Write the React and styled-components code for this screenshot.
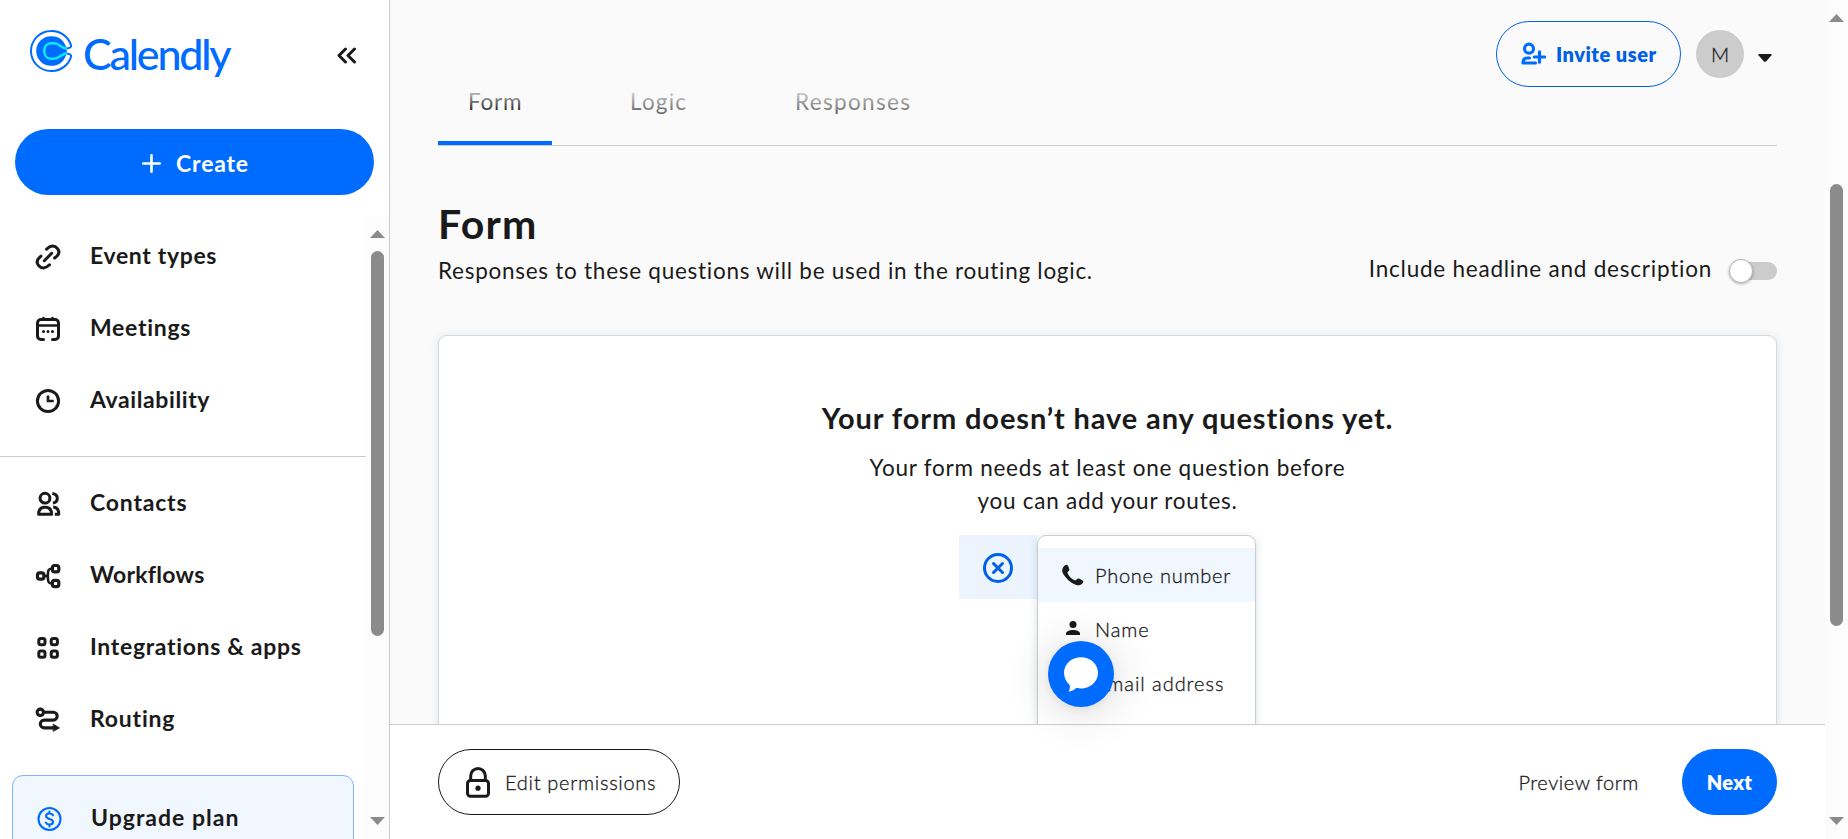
import React from 'react';
import styled, { createGlobalStyle, css } from 'styled-components';

const GlobalStyle = createGlobalStyle`
  * { box-sizing: border-box; }
  body { margin: 0; background: #fafafa; color: #1a1a1a; font-family: Lato, "Open Sans", sans-serif; }
  button { font: inherit; color: inherit; background: none; border: 0; padding: 0; margin: 0; cursor: pointer; }
  h1, h2, p { margin: 0; }
  svg { display: block; flex: none; }
`;

const tracking = css`
  letter-spacing: ${(p) => p.$track || 0}px;
  white-space: nowrap;
`;

/* a weight halfway between light and regular */
const bookWeight = css`
  font-weight: 300;
  -webkit-text-stroke: 0.3px currentColor;
`;

const Page = styled.div`
  display: flex;
  width: 1848px;
  height: 839px;
  overflow: hidden;
`;

/* ---------- scrollbars ---------- */

const ScrollTrack = styled.div`
  flex: none;
  width: 23px;
  display: flex;
  flex-direction: column;
  align-items: center;
  background: #fcfcfc;
  padding: ${(p) => p.$top}px 0 14px;
`;
const ScrollThumb = styled.div`
  width: 13px;
  height: ${(p) => p.$height}px;
  margin-top: ${(p) => p.$offset}px;
  margin-bottom: auto;
  border-radius: 7px;
  background: #8b8b8b;
`;

function ScrollBar({ top, offset, height }) {
  return (
    <ScrollTrack $top={top}>
      <svg width="15" height="8" viewBox="0 0 15 8"><path d="M7.5 0L15 8H0z" fill="#8b8b8b" /></svg>
      <ScrollThumb $height={height} $offset={offset} />
      <svg width="15" height="8" viewBox="0 0 15 8"><path d="M0 0h15L7.5 8z" fill="#8b8b8b" /></svg>
    </ScrollTrack>
  );
}

/* ---------- sidebar ---------- */

const Sidebar = styled.aside`
  flex: none;
  width: 390px;
  border-right: 1px solid #ccc;
  background: #fff;
  display: flex;
  flex-direction: column;
`;
const Brand = styled.div`
  height: 129px;
  padding: 30px 32px 0 30px;
  display: flex;
  align-items: flex-start;
`;
const Wordmark = styled.span`
  margin: -4px 0 0 10px;
  font-size: 43px;
  line-height: 56px;
  font-weight: 500;
  color: #006bff;
  ${tracking}
`;
const Collapse = styled.button`
  margin: 17px 0 0 auto;
`;
const CreateButton = styled.button`
  margin: 0 15px;
  width: 359px;
  height: 66px;
  flex: none;
  border-radius: 33px;
  background: #006bff;
  color: #fff;
  font-size: 23px;
  font-weight: 700;
  display: flex;
  align-items: center;
  justify-content: center;
  gap: 15px;
  padding: 2px 0 0 2px;
  ${tracking}
`;
const NavArea = styled.div`
  flex: 1;
  min-height: 0;
  margin-top: 21px;
  display: flex;
`;
const NavList = styled.nav`
  flex: 1;
  overflow: hidden;
  padding-top: 3px;
`;
const NavItem = styled.a`
  height: 72px;
  padding-left: 35px;
  display: flex;
  align-items: center;
  gap: 29px;
  font-size: 23px;
  font-weight: 700;
  ${tracking}
  svg { margin-top: 4px; }
`;
const Divider = styled.hr`
  height: 1px;
  border: 0;
  margin: 21px 0 9px;
  background: #ccc;
`;
const UpgradeBox = styled.div`
  width: 342px;
  height: 96px;
  margin: 21px 0 0 12px;
  border: 1px solid #7fb5ff;
  border-radius: 11px;
  background: #f0f7ff;
  padding-top: 4px;
`;
const UpgradeItem = styled(NavItem)`
  height: 74px;
  padding-left: 23px;
`;

/* ---------- main ---------- */

const Main = styled.main`
  position: relative;
  flex: 1;
  min-width: 0;
  display: flex;
  flex-direction: column;
`;
const HeaderFade = styled.div`
  position: absolute;
  inset: 0 0 auto 0;
  height: 121px;
  padding: 21px 53px 0 0;
  display: flex;
  justify-content: flex-end;
  align-items: flex-start;
  background: linear-gradient(#fafafa 84px, rgba(250, 250, 250, 0) 112px);
`;
const PillButton = styled.button`
  flex: none;
  height: 66px;
  width: ${(p) => p.$width}px;
  border-radius: 33px;
  border: 1px solid ${(p) => p.$edge};
  display: flex;
  align-items: center;
  justify-content: ${(p) => (p.$center ? 'center' : 'flex-start')};
  padding-left: ${(p) => (p.$center ? 0 : p.$inset)}px;
  gap: ${(p) => p.$gap || 0}px;
  background: ${(p) => p.$fill || 'transparent'};
  color: ${(p) => p.$ink || '#1a1a1a'};
  font-size: 20px;
  ${(p) => (p.$bold ? 'font-weight: 800;' : bookWeight)}
  ${tracking}
`;
const Avatar = styled.div`
  margin: 9px 15px 0 15px;
  width: 48px;
  height: 48px;
  border-radius: 50%;
  background: #ccc;
  font-size: 20px;
  line-height: 48px;
  text-align: center;
  ${bookWeight}
`;
const Caret = styled.svg`
  margin: 33px 0 0 -1px;
`;
const Content = styled.div`
  flex: 1;
  min-height: 0;
  overflow: hidden;
  padding: 80px 48px 0;
`;
const Tabs = styled.div`
  height: 66px;
  display: flex;
  border-bottom: 1px solid #ccc;
`;
const Tab = styled.a`
  height: 65px;
  line-height: 44px;
  padding-left: ${(p) => p.$left}px;
  width: ${(p) => p.$width}px;
  border-bottom: 4px solid ${(p) => (p.$active ? '#006bff' : 'transparent')};
  color: ${(p) => (p.$active ? '#1a1a1a' : '#6a6a6a')};
  font-size: 22.5px;
  ${tracking}
`;
const TitleRow = styled.div`
  margin-top: 54px;
  height: 135px;
  display: flex;
  justify-content: space-between;
`;
const Title = styled.h1`
  font-size: 41px;
  line-height: 48px;
  font-weight: 700;
  ${tracking}
`;
const Description = styled.p`
  font-size: 22.5px;
  line-height: 33px;
  margin-top: 6px;
  ${tracking}
`;
const ToggleGroup = styled.label`
  margin-top: 50px;
  height: 42px;
  display: flex;
  align-items: flex-start;
  gap: 19px;
`;
const ToggleLabel = styled.span`
  font-size: 22.5px;
  line-height: 37px;
  ${tracking}
`;
const ToggleTrack = styled.span`
  width: 46px;
  height: 18px;
  margin-top: 12px;
  border-radius: 9px;
  background: #ccc;
  display: flex;
  align-items: center;
`;
const ToggleKnob = styled.span`
  width: 24px;
  height: 24px;
  margin-left: -2px;
  border-radius: 50%;
  background: #fff;
  border: 1px solid #b8b8b8;
  box-shadow: 0 1px 3px rgba(0, 0, 0, 0.3);
`;
const Card = styled.section`
  height: 480px;
  padding-top: 61px;
  border: 1px solid #d4dae0;
  border-radius: 9px;
  background: #fff;
  box-shadow: 0 1px 9px rgba(71, 103, 136, 0.16);
  display: flex;
  flex-direction: column;
  align-items: center;
`;
const Headline = styled.h2`
  font-size: 29px;
  line-height: 42px;
  font-weight: 700;
  ${tracking}
`;
const Hint = styled.p`
  margin-top: 12px;
  display: flex;
  flex-direction: column;
  align-items: center;
  font-size: 22.5px;
  line-height: 33px;
  ${tracking}
`;
const QuestionPicker = styled.div`
  margin-top: 18px;
  display: flex;
  align-items: flex-start;
`;
const CloseCell = styled.button`
  width: 78px;
  height: 64px;
  padding-top: 2px;
  background: #ebf4ff;
  display: flex;
  align-items: center;
  justify-content: center;
`;
const Menu = styled.div`
  width: 219px;
  height: 260px;
  padding-top: 12px;
  border: 1px solid #ccc;
  border-radius: 9px;
  background: #fff;
  box-shadow: 0 1px 8px rgba(71, 103, 136, 0.2);
`;
const MenuItem = styled.div`
  height: 54px;
  padding-left: 23px;
  display: flex;
  align-items: center;
  gap: 10px;
  font-size: 20px;
  background: ${(p) => (p.$active ? '#f0f7ff' : 'transparent')};
  ${bookWeight}
  ${tracking}
`;
const Footer = styled.footer`
  flex: none;
  height: 115px;
  position: relative;
  border-top: 1px solid #ccc;
  background: #fff;
  padding: 24px 48px 0;
  display: flex;
`;
const PreviewLink = styled.a`
  margin: 0 43px 0 auto;
  font-size: 20px;
  line-height: 66px;
  ${bookWeight}
  ${tracking}
`;
const ChatBubble = styled.button`
  position: absolute;
  left: 658px;
  top: 641px;
  width: 66px;
  height: 66px;
  border-radius: 50%;
  background: #006bff;
  box-shadow: 0 2px 9px rgba(0, 0, 0, 0.06), 0 4px 44px rgba(0, 0, 0, 0.17);
  display: flex;
  align-items: center;
  justify-content: center;
`;

/* ---------- drawings ---------- */

const Icon = ({ size = 26, children, color = '#1a1a1a', sw = 3 }) => (
  <svg width={size} height={size} viewBox={`0 0 ${size} ${size}`} fill="none" stroke={color} strokeWidth={sw} strokeLinecap="round" strokeLinejoin="round">
    {children}
  </svg>
);

const LogoMark = () => (
  <svg width="43" height="42" viewBox="0 0 43 42" fill="none">
    <path d="M37 18.700l3.400-1.400q1-.7.700-1.700A20.200 20 0 0 0 21 1a20 20 0 0 0 0 40 20.200 20 0 0 0 20.100-14.600q.3-1-.7-1.700L37 23.300" stroke="#006bff" strokeWidth="2" />
    <path d="M35.500 15.500C32.500 9 28.500 6.200 21 6.200a14.800 14.800 0 0 0 0 29.600c7.500 0 11.500-2.800 14.500-9.300L37 23.500v-5z" fill="#006bff" />
    <path d="M37 18.700c-7-.9-7-5.400-13-5.400h-3c-4.300 0-6.800 3.300-6.800 7.700s2.500 7.700 6.800 7.700h3c6 0 6-4.500 13-5.400" stroke="#0ae8f0" strokeWidth="2.500" />
    <path d="M35.500 21q2.500-1 6-.8v1.600q-3.500.2-6-.8z" fill="#fff" />
  </svg>
);

const navIcons = {
  link: (
    <Icon>
      <path d="M11.500 5.200C15.500.9 20 1.500 22.200 4.200c2.600 3 1.800 6-.6 8.200L19.600 14" />
      <path d="M14.500 20.800C10.500 25 6 24.500 3.800 21.800c-2.600-3-1.800-6 .6-8.200L6 12.200" />
      <path d="M9.300 16.700l7.400-7.400" />
    </Icon>
  ),
  calendar: (
    <Icon>
      <path d="M8.500 23.500H6A3.500 3.500 0 0 1 2.500 20V7A3.500 3.500 0 0 1 6 3.500h14A3.500 3.500 0 0 1 23.500 7v13a3.500 3.500 0 0 1-3.500 3.500h-2.500" />
      <path d="M3 9.500h20M8.500 2v1.500M17.500 2v1.500" strokeWidth="2.600" />
      <path d="M8.500 15.500h.01M13 15.500h.01M17.500 15.500h.01" />
    </Icon>
  ),
  clock: (
    <Icon>
      <circle cx="13" cy="13" r="10.600" />
      <path d="M13 7.500V13h5.700" strokeWidth="2.700" strokeLinecap="butt" strokeLinejoin="miter" />
    </Icon>
  ),
  contacts: (
    <Icon sw={3}>
      <circle cx="10" cy="7.200" r="4.900" />
      <path d="M17.300 2.400c3.300.4 5 2.300 5 4.800s-1.700 4.400-4.400 4.900" strokeLinecap="butt" />
      <path d="M3.600 23.300c0-4.600 2-7 6.400-7s6.600 2.400 6.600 7z" />
      <path d="M18.200 16c3.700.2 5.600 2.700 5.600 7.300h-4" strokeLinecap="butt" />
    </Icon>
  ),
  flows: (
    <Icon sw={3.2}>
      <rect x="2.500" y="9.800" width="6.400" height="6.400" rx="2.200" />
      <rect x="17.400" y="2.500" width="6.400" height="6.400" rx="2.200" />
      <rect x="17.400" y="17.300" width="6.400" height="6.400" rx="2.200" />
      <path d="M9.500 13h3.200M17 5.500c-4.500 0-4 3.500-4.200 7.500.2 4-.3 7.500 4.200 7.500" strokeWidth="2.600" />
    </Icon>
  ),
  grid: (
    <Icon sw={3}>
      {[[3.800, 3.600], [16.200, 3.600], [3.800, 16], [16.200, 16]].map(([x, y]) => (
        <rect key={`${x}-${y}`} x={x} y={y} width="6.200" height="6.200" rx="2" />
      ))}
    </Icon>
  ),
  route: (
    <Icon sw={3.100}>
      <circle cx="5.300" cy="5.300" r="3.200" />
      <path d="M9 5.300h9.300a3.900 3.900 0 0 1 0 7.800H9.200a3.900 3.900 0 0 0 0 7.800H19" />
      <path d="M18.500 17.300l6 3.600-6 3.300z" fill="#1a1a1a" stroke="#1a1a1a" strokeWidth=".8" />
    </Icon>
  ),
};

const primaryNav = [
  ['link', 'Event types', 0.65],
  ['calendar', 'Meetings', 0.7],
  ['clock', 'Availability', 0.6],
];
const secondaryNav = [
  ['contacts', 'Contacts', 0.8],
  ['flows', 'Workflows', 0.25],
  ['grid', 'Integrations & apps', 0.67],
  ['route', 'Routing', 0.8],
];

const NavGroup = ({ items }) =>
  items.map(([icon, label, track]) => (
    <NavItem key={label} $track={track}>
      {navIcons[icon]}
      <span>{label}</span>
    </NavItem>
  ));

export default function App() {
  return (
    <Page>
      <GlobalStyle />
      <Sidebar>
        <Brand>
          <LogoMark />
          <Wordmark $track={-2.2}>Calendly</Wordmark>
          <Collapse aria-label="Collapse">
            <svg width="20" height="17" viewBox="0 0 20 17" fill="none" stroke="#1a1a1a" strokeWidth="3" strokeLinecap="round" strokeLinejoin="round">
              <path d="M8.500 2L2 8.500 8.500 15M17.500 2L11 8.500l6.500 6.500" />
            </svg>
          </Collapse>
        </Brand>
        <CreateButton $track={0.8}>
          <svg width="19" height="19" viewBox="0 0 19 19" stroke="#fff" strokeWidth="2.600" strokeLinecap="round"><path d="M9.500 1.300v16.400M1.300 9.500h16.400" /></svg>
          <span>Create</span>
        </CreateButton>
        <NavArea>
          <NavList>
            <NavGroup items={primaryNav} />
            <Divider />
            <NavGroup items={secondaryNav} />
            <UpgradeBox>
              <UpgradeItem $track={1}>
                <Icon color="#006bff" sw={2.1}>
                  <circle cx="13.500" cy="13" r="11" />
                  <path d="M17 9.300c-.6-1.300-1.800-1.900-3.500-1.900-2 0-3.500 1-3.500 2.700 0 3.800 7 2 7 5.700 0 1.800-1.500 2.800-3.500 2.800-1.800 0-3-.7-3.600-2M13.500 5.500v2M13.500 18.500v2" />
                </Icon>
                <span>Upgrade plan</span>
              </UpgradeItem>
            </UpgradeBox>
          </NavList>
          <ScrollBar top={14} offset={13} height={385} />
        </NavArea>
      </Sidebar>

      <Main>
        <Content>
          <Tabs>
            <Tab $active $left={30} $width={114} $track={0.8}>Form</Tab>
            <Tab $left={78} $width={243} $track={1.2}>Logic</Tab>
            <Tab $left={0} $width={120} $track={1.35}>Responses</Tab>
          </Tabs>
          <TitleRow>
            <div>
              <Title $track={1.3}>Form</Title>
              <Description $track={0.73}>Responses to these questions will be used in the routing logic.</Description>
            </div>
            <ToggleGroup>
              <ToggleLabel $track={0.77}>Include headline and description</ToggleLabel>
              <ToggleTrack><ToggleKnob /></ToggleTrack>
            </ToggleGroup>
          </TitleRow>
          <Card>
            <Headline $track={0.88}>Your form doesn’t have any questions yet.</Headline>
            <Hint $track={0.75}>
              <span>Your form needs at least one question before</span>
              <span>you can add your routes.</span>
            </Hint>
            <QuestionPicker>
              <CloseCell aria-label="Close">
                <svg width="30" height="30" viewBox="0 0 30 30" fill="none" stroke="#0060e6" strokeWidth="3" strokeLinecap="round">
                  <circle cx="15" cy="15" r="13.500" />
                  <path d="M10.500 10.500l9 9M19.500 10.500l-9 9" />
                </svg>
              </CloseCell>
              <Menu>
                <MenuItem $active $track={0.75}>
                  <svg width="24" height="24" viewBox="0 0 24 24"><path d="M2 4.500C3 3 4.500 1.600 6 1.800c1 .2 2.600 4.700 2.300 5.400-.4 1-2 1.400-1.800 2.300.5 3 4.500 7 7.500 7.800 1.200.2 1.900-1.800 3.200-1.900 1 0 5 2 5.100 2.900.1 1.500-1.700 3.700-4.300 4C11.500 23 1 12 1.200 7.500 1.300 6.500 1.500 5.300 2 4.500z" fill="#1a1a1a" /></svg>
                  <span>Phone number</span>
                </MenuItem>
                <MenuItem $track={0.9}>
                  <svg width="24" height="24" viewBox="0 0 24 24" fill="#1a1a1a"><circle cx="12" cy="7.500" r="3.500" /><path d="M5 18v-1.500c0-2.300 3.500-3.500 7-3.500s7 1.200 7 3.500V18z" /></svg>
                  <span>Name</span>
                </MenuItem>
                <MenuItem $track={0.95}>
                  <svg width="24" height="24" viewBox="0 0 24 24" fill="none" stroke="#1a1a1a" strokeWidth="2"><rect x="3" y="5" width="18" height="14" rx="2" /><path d="M4 7l8 6 8-6" /></svg>
                  <span>Email address</span>
                </MenuItem>
              </Menu>
            </QuestionPicker>
          </Card>
        </Content>
        <Footer>
          <PillButton $width={242} $edge="#1a1a1a" $inset={27} $gap={15} $track={0.7}>
            <svg width="24" height="31" viewBox="0 0 24 31" fill="none" stroke="#1a1a1a" strokeWidth="3">
              <rect x="1.500" y="13.500" width="21" height="15.700" rx="3" />
              <path d="M4.700 13V8.800a7.300 7.300 0 0 1 14.600 0V13" />
              <circle cx="12" cy="21.200" r="2.600" fill="#1a1a1a" stroke="none" />
            </svg>
            <span>Edit permissions</span>
          </PillButton>
          <PreviewLink $track={0.55}>Preview form</PreviewLink>
          <PillButton $width={95} $edge="#006bff" $fill="#006bff" $ink="#fff" $bold $center $track={0.3}>Next</PillButton>
        </Footer>
        <HeaderFade>
          <PillButton $width={185} $edge="#0060e6" $ink="#0060e6" $inset={24} $gap={10} $bold $track={0.5}>
            <Icon size={25} color="#006bff" sw={3.2}>
              <circle cx="8" cy="6.700" r="4.500" />
              <path d="M8.500 16H6.500C3.500 16 2 18 2 21h12.500M18.500 9.800v10.400M13.300 15h10.400" />
            </Icon>
            <span>Invite user</span>
          </PillButton>
          <Avatar>M</Avatar>
          <Caret width="14" height="8" viewBox="0 0 14 8"><path d="M.5 1.200Q-.2 0 1.200 0h11.600q1.400 0 .7 1.200L8.300 7.200q-1.300 1.200-2.600 0z" fill="#1a1a1a" /></Caret>
        </HeaderFade>
        <ChatBubble aria-label="Chat">
          <svg width="36" height="36" viewBox="0 0 36 36" fill="#fff">
            <path d="M18 1.200c9.500 0 17 6.800 17 15.600s-7.500 15.700-17 15.700c-1.700 0-3.300-.3-4.800-.7C11 34.500 8 35.600 5.600 35.500c1.300-2 1.500-4.500 1.100-6.600C3.200 26 1 21.700 1 16.800 1 8 8.500 1.200 18 1.200z" />
          </svg>
        </ChatBubble>
      </Main>
      <ScrollBar top={14} offset={162} height={442} />
    </Page>
  );
}
